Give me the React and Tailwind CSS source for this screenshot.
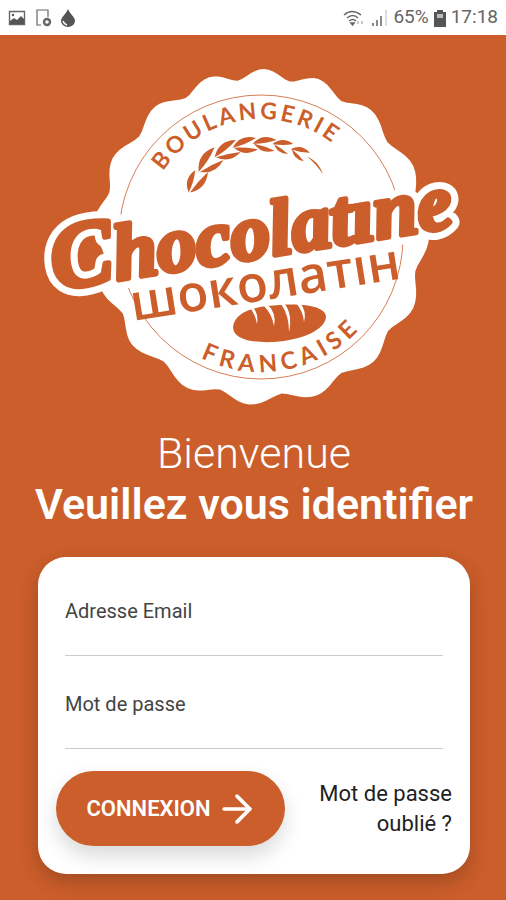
import { ArrowRight } from "lucide-react";

const ORANGE = "#cb5e2a";

// angle of the top of each wave round the badge
const WAVES = [1, 20, 41, 65, 90, 115, 138, 161, 184, 206, 230, 252, 275, 298, 321, 342, 361];

function badgePath(cx, cy, inner, depth) {
  const points = [];
  for (let i = 0; i < WAVES.length - 1; i++) {
    for (let step = 0; step < 12; step++) {
      const t = step / 12;
      const a = ((WAVES[i] + (WAVES[i + 1] - WAVES[i]) * t) * Math.PI) / 180;
      const r = inner + depth * Math.pow(0.5 + 0.5 * Math.cos(2 * Math.PI * t), 0.8);
      points.push(`${(cx + r * Math.sin(a)).toFixed(1)} ${(cy - r * Math.cos(a)).toFixed(1)}`);
    }
  }
  return `M${points.join("L")}Z`;
}

const BADGE = badgePath(221, 177, 158, 10);

// ear of wheat: [base, outer tip, inner tip] of each pair of leaves
const LEAVES = [
  [[56, 188], [76, 120], [114, 126]],
  [[86, 126], [134, 52], [160, 90]],
  [[134, 82], [198, 30], [212, 66]],
  [[188, 53], [258, 24], [264, 58]],
  [[248, 41], [320, 30], [314, 62]],
  [[308, 42], [370, 42], [354, 72]],
  [[362, 58], [420, 68], [402, 94]],
];

function leafPath([x1, y1], [x2, y2], left, right) {
  const mx = (x1 + x2) / 2;
  const my = (y1 + y2) / 2;
  const nx = (y2 - y1) / 66;
  const ny = (x1 - x2) / 66;
  return `M${x1} ${y1}Q${mx + nx * left} ${my + ny * left} ${x2} ${y2}Q${mx - nx * right} ${my - ny * right} ${x1} ${y1}Z`;
}

function Logo() {
  return (
    <svg viewBox="-2 0 430 350" className="w-[430px] max-w-full" role="img" aria-label="Chocolatine">
      <defs>
        <path id="arcTop" d="M103 177a118 118 0 0 1 236 0" />
        <path id="arcBottom" d="M86 177a135 135 0 0 0 270 0" />
      </defs>

      <path d={BADGE} fill="#fff" />
      <circle cx="221" cy="177" r="142" fill="none" stroke={ORANGE} strokeOpacity="0.8" />

      <g fill={ORANGE} fontFamily="Lato, sans-serif" fontWeight="700" textAnchor="middle">
        <text fontSize="23" letterSpacing="3">
          <textPath href="#arcTop" startOffset="45%">BOULANGERIE</textPath>
        </text>
        <text fontSize="24" letterSpacing="5">
          <textPath href="#arcBottom" startOffset="56%">FRANCAISE</textPath>
        </text>
      </g>

      <g transform="translate(130 70) scale(0.333)" fill={ORANGE}>
        {LEAVES.map(([base, outer, inner]) => (
          <g key={base[0]}>
            <path d={leafPath(base, outer, 26, 6)} />
            <path d={leafPath([base[0] + 4, base[1]], inner, 4, 24)} />
          </g>
        ))}
        <path d="M412 80Q446 92 460 134Q438 100 412 80Z" />
      </g>

      <g transform="translate(15 230) rotate(-9)" fontFamily="'Liberation Serif', serif" fontWeight="700" fontStyle="italic" strokeLinejoin="round">
        <text fontSize="79" fill="#fff" stroke="#fff" strokeWidth="19">
          <tspan fontSize="94">C</tspan>hocolatıne
        </text>
        <text fontSize="79" fill={ORANGE} stroke={ORANGE} strokeWidth="5">
          <tspan fontSize="94">C</tspan>hocolatıne
        </text>
      </g>

      <g transform="translate(93 261) rotate(-9)">
        <text fill={ORANGE} fontFamily="'Open Sans', sans-serif" fontWeight="600" fontSize="51">шоколатıн</text>
      </g>

      <path d="M193 267C195 250 218 246 240 245C266 243 286 247 286 257C285 270 262 280 234 282C211 283 193 279 193 267Z" fill={ORANGE} />
      <g fill="#fff">
        <path d="M211 245q8 8 6 19q-2-11-8-17Z" />
        <path d="M227 244q10 9 7 22q-2-12-10-20Z" />
        <path d="M244 243q9 11 5 29q0-17-8-28Z" />
        <path d="M260 243q7 8 4 19q-1-11-8-19Z" />
      </g>
    </svg>
  );
}

function StatusBar() {
  return (
    <header className="flex h-[35px] items-center justify-between bg-white px-2 text-[#666]">
      <div className="flex items-center gap-2">
        <svg viewBox="0 0 18 18" className="size-[18px]">
          <path d="M1.500 2.500h15v13h-15Z" fill="none" stroke="#666" strokeWidth="1.4" />
          <path d="M2 12l4-3 3 2 4-4 3 3v5H2Z" fill="#555" />
          <circle cx="5" cy="6" r="1.2" fill="#555" />
        </svg>
        <svg viewBox="0 0 18 18" className="size-[18px]" fill="none" stroke="currentColor">
          <path d="M7 16H3V1h11v7" strokeWidth="1.2" />
          <circle cx="13" cy="13" r="3" strokeWidth="2.4" />
        </svg>
        <svg viewBox="0 0 16 18" className="h-[18px] w-4">
          <path d="M8 0C10 5 15 8 15 12A7 6 0 0 1 1 12C1 8 6 5 8 0Z" fill="#555" />
          <path d="M3 12q1 3 4 4" stroke="#fff" strokeWidth="1.500" fill="none" />
        </svg>
      </div>
      <div className="flex items-center gap-1 text-[19px]">
        <svg viewBox="0 0 24 18" className="h-[18px] w-6" fill="none" stroke="currentColor" strokeWidth="1.5">
          <path d="M1 6q8-7 17 0M4 9q6-5 11 0M6 12q4-3 7 0" />
          <path d="M8 14h3l-1.500 2Z" fill="currentColor" />
          <path d="M15 15v-3M19 15v-3" stroke="#bbb" />
        </svg>
        <svg viewBox="0 0 18 18" className="size-[18px]">
          <path d="M1 14h2v3H1Z" fill="#888" />
          <path d="M5 11h2v6H5ZM9 7h2v10H9Z" fill="#888" />
          <path d="M14 1h2v16h-2Z" fill="#ddd" />
        </svg>
        <span>65%</span>
        <svg viewBox="0 0 14 18" className="h-[18px] w-[14px]">
          <path d="M4 1h6v2h3v15H1V3h3Z" fill="#555" />
          <path d="M4 5h6v4H4Z" fill="#bbb" />
        </svg>
        <span>17:18</span>
      </div>
    </header>
  );
}

function Field({ id, label, type }) {
  return (
    <div className="mx-[27px] flex h-[93px] flex-col border-b border-[#ccc]">
      <label htmlFor={id} className="pt-9 text-xl leading-6 text-[#444]">
        {label}
      </label>
      <input id={id} type={type} className="min-h-0 w-full flex-1 bg-transparent outline-none" />
    </div>
  );
}

export default function App() {
  return (
    <div className="min-h-screen bg-[#cb5e2a] font-[Roboto,sans-serif]">
      <StatusBar />
      <main className="flex flex-col pr-9 pb-[26px] pl-[38px]">
        <div className="-mr-9 -ml-[38px] mt-[25px] flex justify-center">
          <Logo />
        </div>

        <h1 className="-mx-4 mt-[18px] text-center text-[43px] leading-[51px] font-semibold text-white">
          <span className="block font-light">Bienvenue</span>
          Veuillez vous identifier
        </h1>

        <form
          className="mt-[27px] rounded-[28px] bg-white pt-[6px] pb-7 shadow-[0_8px_20px_rgba(0,0,0,0.2)]"
          onSubmit={(e) => e.preventDefault()}
        >
          <Field id="email" label="Adresse Email" type="email" />
          <Field id="password" label="Mot de passe" type="password" />
          <div className="mt-[22px] flex items-center justify-between px-[18px]">
            <button
              type="submit"
              className="flex h-[75px] w-[229px] items-center justify-center gap-1 rounded-full bg-[#cb5e2a] pl-1 text-[22px] font-semibold text-white shadow-[0_10px_20px_rgba(0,0,0,0.15)]"
            >
              CONNEXION
              <ArrowRight size={44} strokeWidth={2} />
            </button>
            <a href="#" className="w-[140px] text-right text-[22px] leading-[30px] text-[#222]">
              Mot de passe oublié ?
            </a>
          </div>
        </form>
      </main>
    </div>
  );
}
